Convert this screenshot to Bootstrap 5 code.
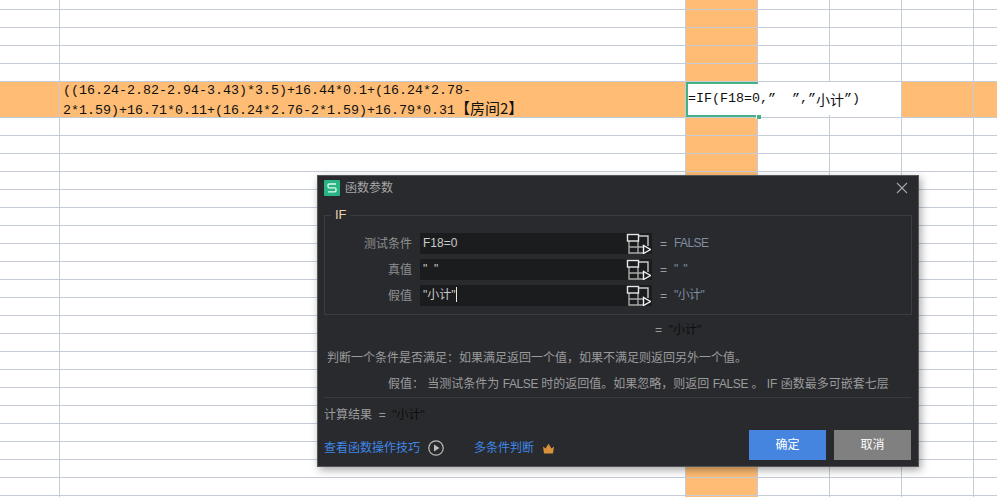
<!DOCTYPE html>
<html lang="zh">
<head>
<meta charset="utf-8">
<title>函数参数</title>
<link href="https://cdn.jsdelivr.net/npm/bootstrap@5.3.0/dist/css/bootstrap.min.css" rel="stylesheet">
<style>
html,body{width:997px;height:497px;overflow:hidden;background:#fff}
body{font-family:"Liberation Sans","Noto Sans CJK SC",sans-serif;position:relative}
.sheet{border-collapse:collapse;table-layout:fixed;width:1001px;margin-top:-9px;margin-left:-1px}
.sheet td{height:18px;padding:0;border:1px solid #c6ccd7;line-height:16px}
.sheet col.c0{width:60px}.sheet col.c1{width:626px}.sheet col.c2{width:72px}.sheet col.c3{width:72px}.sheet col.c4{width:72px}.sheet col.c5{width:72px}.sheet col.c6{width:27px}
.sheet .hl{background:#ffbc74}
.sheet tr.tall td{height:36px}
.sheet .two-lines{height:35px;line-height:18px;overflow:hidden}
.sheet .cjk{font-family:"Noto Sans CJK SC",sans-serif;font-size:15px;line-height:1}
.sheet .cjk-s{font-size:14px}
.sheet .mono{font-family:"Liberation Mono","Noto Sans CJK SC",monospace;font-size:13.33px;color:#111;padding:0 3px;white-space:nowrap}
.sheet td.edit{background:#fff;position:relative;border:0;padding:0}
.sheet .edit-line{position:absolute;left:2px;top:0;bottom:2px;width:213px;background:#fff;display:flex;align-items:center;padding:0}
.edit-left{position:absolute;left:0;top:0;bottom:0;width:2px;background:#45b186}
.edit-top{position:absolute;left:0;top:0;width:72px;height:2px;background:#45b186}
.edit-bot{position:absolute;left:0;bottom:0;width:72px;height:2px;background:#45b186}
.edit-grip{position:absolute;left:70px;bottom:-2px;width:5px;height:5px;background:#45b186;border:1px solid #fff;border-width:1px 0 0 1px}
.dlg{position:absolute;left:317px;top:175px;width:602px;height:292px;background:#292a2d;border:1px solid #55565a;box-shadow:2px 3px 8px rgba(0,0,0,.35);font-size:12px;color:#9a9b9d;line-height:16px}
.dlg-head{height:24px;padding:0 10px 0 6px}
.dlg-logo{width:16px;height:16px;background:#27b583;border-radius:1px}
.dlg-title{color:#a5a6a8;margin-left:5px}
.box{position:relative;margin:15px 6px 0 6px;height:100px;border:1px solid #3c3d40;padding-top:17px}
.box-name{position:absolute;left:6px;top:-9px;padding:0 4px;background:#292a2d;color:#ecd0ac;font-size:13px;font-weight:500}
.arg{height:21px;margin-bottom:5px}
.arg-label{width:95px;padding-right:8px;text-align:right;color:#8e8f91}
.arg-input{width:232px;height:21px;line-height:21px;background:#1b1c1e;color:#c9cacb;padding:0 3px;position:relative}
.caret-bar{display:inline-block;width:1px;height:15px;background:#e8e8e8;vertical-align:-3px}
.arg-pick{position:absolute;right:1px;top:0}
.eq{width:15px;text-align:right;margin-right:7px;color:#9a9b9d}
.arg-val{color:#7f8da0;margin-top:-2px;letter-spacing:-.6px}
.sum-line{height:16px;margin-top:7px;padding-left:337px}
.res{color:#0e0e0e}
.desc{padding-left:9px;margin-top:12px}
.desc2{padding-left:70px;margin-top:10px;white-space:pre}
.lat{letter-spacing:-.4px}
.rule{height:1px;background:#3a3b3e;margin:5px 7px 0 6px}
.total{padding-left:6px;margin-top:9px;white-space:pre}
.foot{padding:0 7px 0 6px;margin-top:7px}
.foot-links{padding-top:6px}
.gap-more{margin-left:30px}
.lnk{color:#3f86e6;text-decoration:none}
.dbtn{width:77px;height:30px;border:0;border-radius:0;color:#fff;font-size:12px;padding:0}
.dbtn-ok{background:#4585e0}.dbtn-no{background:#808080}
</style>
</head>
<body>
<table class="sheet">
<colgroup><col class="c0"><col class="c1"><col class="c2"><col class="c3"><col class="c4"><col class="c5"><col class="c6"></colgroup>
<tbody>
<tr><td></td><td></td><td class="hl"></td><td></td><td></td><td></td><td></td></tr>
<tr><td></td><td></td><td class="hl"></td><td></td><td></td><td></td><td></td></tr>
<tr><td></td><td></td><td class="hl"></td><td></td><td></td><td></td><td></td></tr>
<tr><td></td><td></td><td class="hl"></td><td></td><td></td><td></td><td></td></tr>
<tr><td></td><td></td><td class="hl"></td><td></td><td></td><td></td><td></td></tr>
<tr class="tall"><td class="hl"></td><td class="hl mono"><div class="two-lines">((16.24-2.82-2.94-3.43)*3.5)+16.44*0.1+(16.24*2.78-<br>2*1.59)+16.71*0.11+(16.24*2.76-2*1.59)+16.79*0.31<span class="cjk">【房间2】</span></div></td><td class="edit"><div class="edit-line mono">=IF(F18=0,”&nbsp;&nbsp;”,”<span class="cjk cjk-s">小计</span>”)</div><span class="edit-left"></span><span class="edit-top"></span><span class="edit-bot"></span><span class="edit-grip"></span></td><td></td><td></td><td class="hl"></td><td class="hl"></td></tr>
<tr><td></td><td></td><td class="hl"></td><td></td><td></td><td></td><td></td></tr>
<tr><td></td><td></td><td class="hl"></td><td></td><td></td><td></td><td></td></tr>
<tr><td></td><td></td><td class="hl"></td><td></td><td></td><td></td><td></td></tr>
<tr><td></td><td></td><td class="hl"></td><td></td><td></td><td></td><td></td></tr>
<tr><td></td><td></td><td class="hl"></td><td></td><td></td><td></td><td></td></tr>
<tr><td></td><td></td><td class="hl"></td><td></td><td></td><td></td><td></td></tr>
<tr><td></td><td></td><td class="hl"></td><td></td><td></td><td></td><td></td></tr>
<tr><td></td><td></td><td class="hl"></td><td></td><td></td><td></td><td></td></tr>
<tr><td></td><td></td><td class="hl"></td><td></td><td></td><td></td><td></td></tr>
<tr><td></td><td></td><td class="hl"></td><td></td><td></td><td></td><td></td></tr>
<tr><td></td><td></td><td class="hl"></td><td></td><td></td><td></td><td></td></tr>
<tr><td></td><td></td><td class="hl"></td><td></td><td></td><td></td><td></td></tr>
<tr><td></td><td></td><td class="hl"></td><td></td><td></td><td></td><td></td></tr>
<tr><td></td><td></td><td class="hl"></td><td></td><td></td><td></td><td></td></tr>
<tr><td></td><td></td><td class="hl"></td><td></td><td></td><td></td><td></td></tr>
<tr><td></td><td></td><td class="hl"></td><td></td><td></td><td></td><td></td></tr>
<tr><td></td><td></td><td class="hl"></td><td></td><td></td><td></td><td></td></tr>
<tr><td></td><td></td><td class="hl"></td><td></td><td></td><td></td><td></td></tr>
<tr><td></td><td></td><td class="hl"></td><td></td><td></td><td></td><td></td></tr>
<tr><td></td><td></td><td class="hl"></td><td></td><td></td><td></td><td></td></tr>
<tr><td></td><td></td><td class="hl"></td><td></td><td></td><td></td><td></td></tr>
<tr><td></td><td></td><td class="hl"></td><td></td><td></td><td></td><td></td></tr>
</tbody>
</table>

<svg width="0" height="0" class="position-absolute">
<symbol id="pick" viewBox="0 0 25 21">
<g fill="none" stroke="#a9a9a9" stroke-width="1.4"><path d="M3 8V20H17M3 14H17M12 8V20"/><path d="M12 3H22V13" stroke="#c8c8c8"/></g>
<rect x="1.5" y="1.5" width="11" height="6.5" fill="none" stroke="#e6e6e6" stroke-width="1.4"/>
<path d="M17.5 12.5V20.5L24.5 16.5Z" fill="#1b1c1e" stroke="#f2f2f2" stroke-width="1.4"/>
</symbol>
</svg>

<div class="dlg">
  <div class="dlg-head d-flex align-items-center">
    <div class="dlg-logo d-flex align-items-center justify-content-center">
      <svg width="10" height="10" viewBox="0 0 10 10"><path d="M9 1H2.2Q1 1 1 2.2V3.6Q1 4.8 2.2 4.8H7.8Q9 4.8 9 6V7.6Q9 8.8 7.8 8.8H1" fill="none" stroke="#e8f6ef" stroke-width="1.3"/></svg>
    </div>
    <span class="dlg-title">函数参数</span>
    <svg class="ms-auto" width="12" height="12" viewBox="0 0 12 12"><path d="M1 1L11 11M11 1L1 11" stroke="#a6a7a9" stroke-width="1.1"/></svg>
  </div>
  <div class="box">
    <span class="box-name">IF</span>
    <div class="arg d-flex align-items-center">
      <div class="arg-label">测试条件</div>
      <div class="arg-input">F18=0<svg class="arg-pick" width="25" height="21"><use href="#pick"/></svg></div>
      <div class="eq">=</div><div class="arg-val">FALSE</div>
    </div>
    <div class="arg d-flex align-items-center">
      <div class="arg-label">真值</div>
      <div class="arg-input">" &nbsp;"<svg class="arg-pick" width="25" height="21"><use href="#pick"/></svg></div>
      <div class="eq">=</div><div class="arg-val">" &nbsp;"</div>
    </div>
    <div class="arg d-flex align-items-center">
      <div class="arg-label">假值</div>
      <div class="arg-input">"小计"<span class="caret-bar"></span><svg class="arg-pick" width="25" height="21"><use href="#pick"/></svg></div>
      <div class="eq">=</div><div class="arg-val">"小计"</div>
    </div>
  </div>
  <div class="sum-line">=&nbsp;&nbsp;<span class="res">"小计"</span></div>
  <div class="desc">判断一个条件是否满足&#xFF1A;如果满足返回一个值&#xFF0C;如果不满足则返回另外一个值。</div>
  <div class="desc2">假值&#xFF1A; 当测试条件为 <span class="lat">FALSE</span> 时的返回值。如果忽略&#xFF0C;则返回 <span class="lat">FALSE</span> 。 IF 函数最多可嵌套七层</div>
  <div class="rule"></div>
  <div class="total">计算结果  =  <span class="res">"小计"</span></div>
  <div class="foot d-flex align-items-center">
    <div class="foot-links d-flex align-items-center">
      <a class="lnk" href="#">查看函数操作技巧</a>
      <svg class="ms-2" width="16" height="16" viewBox="0 0 16 16"><circle cx="8" cy="8" r="7.2" fill="none" stroke="#bdbdbd" stroke-width="1.2"/><path d="M6 4.5V11.5L11.5 8Z" fill="#bdbdbd"/></svg>
      <a class="lnk gap-more" href="#">多条件判断</a>
      <svg class="ms-2" width="13" height="11" viewBox="0 0 13 11"><path d="M1 3.5L3.5 5.5L6.5 .8L9.5 5.5L12 3.5L11 10.5H2Z" fill="#d9903a"/></svg>
    </div>
    <button class="btn dbtn dbtn-ok ms-auto me-2" type="button">确定</button>
    <button class="btn dbtn dbtn-no" type="button">取消</button>
  </div>
</div>
</body>
</html>
